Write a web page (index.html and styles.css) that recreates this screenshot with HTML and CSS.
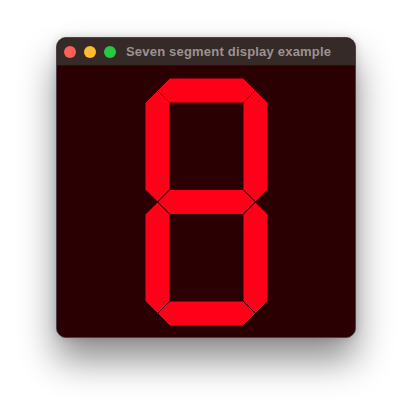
FILE: index.html
```html
<!DOCTYPE html>
<html>
<head>
<meta charset="utf-8">
<link rel="stylesheet" href="styles.css">
</head>
<body>
<div class="window">
  <div class="titlebar">
    <div class="lights">
      <span class="light red"></span>
      <span class="light yellow"></span>
      <span class="light green"></span>
    </div>
    <div class="title">Seven segment display example</div>
  </div>
  <div class="content">
    <svg class="digit" width="298" height="271" viewBox="57 66 298 271" xmlns="http://www.w3.org/2000/svg">
      <g fill="#ff0018" stroke="#2a0003" stroke-width="1">
        <!-- a: top -->
        <polygon points="157.5,90.5 170,78 243,78 255.5,90.5 243,103 170,103"/>
        <!-- f: upper left -->
        <polygon points="157.5,90.5 170,103 170,189.5 157.5,202 145,189.5 145,103"/>
        <!-- b: upper right -->
        <polygon points="255.5,90.5 268,103 268,189.5 255.5,202 243,189.5 243,103"/>
        <!-- g: middle -->
        <polygon points="157.5,202 170,189.5 243,189.5 255.5,202 243,214.5 170,214.5"/>
        <!-- e: lower left -->
        <polygon points="157.5,202 170,214.5 170,301 157.5,313.5 145,301 145,214.5"/>
        <!-- c: lower right -->
        <polygon points="255.5,202 268,214.5 268,301 255.5,313.5 243,301 243,214.5"/>
        <!-- d: bottom -->
        <polygon points="157.5,313.5 170,301 243,301 255.5,313.5 243,326 170,326"/>
      </g>
    </svg>
  </div>
</div>
</body>
</html>
```
FILE: styles.css
```css
html, body {
  margin: 0;
  padding: 0;
  background: #ffffff;
}
body {
  padding-top: 37px;
  padding-left: 56px;
  width: 412px;
  height: 412px;
  box-sizing: border-box;
  overflow: hidden;
}
.window {
  width: 300px;
  height: 301px;
  box-sizing: border-box;
  border: 1px solid #4a4444;
  border-radius: 10px;
  overflow: hidden;
  background: #2a0003;
  box-shadow: 0 22px 36px rgba(0, 0, 0, 0.45), 0 0 8px rgba(0, 0, 0, 0.15);
  display: flex;
  flex-direction: column;
}
.titlebar {
  height: 28px;
  flex: 0 0 28px;
  box-sizing: border-box;
  background: #362a28;
  border-bottom: 1px solid #1e1414;
  display: flex;
  align-items: center;
  padding-left: 7px;
}
.lights {
  display: flex;
  gap: 8px;
}
.light {
  width: 12px;
  height: 12px;
  border-radius: 50%;
  display: block;
}
.red { background: #ff5f57; }
.yellow { background: #febc2e; }
.green { background: #28c840; }
.title {
  margin-left: 10px;
  font-family: "Liberation Sans", Arial, sans-serif;
  font-weight: bold;
  font-size: 13px;
  letter-spacing: 0.2px;
  color: #9d9291;
  white-space: nowrap;
}
.content {
  flex: 1;
  background: #2a0003;
}
.digit {
  display: block;
}
```
